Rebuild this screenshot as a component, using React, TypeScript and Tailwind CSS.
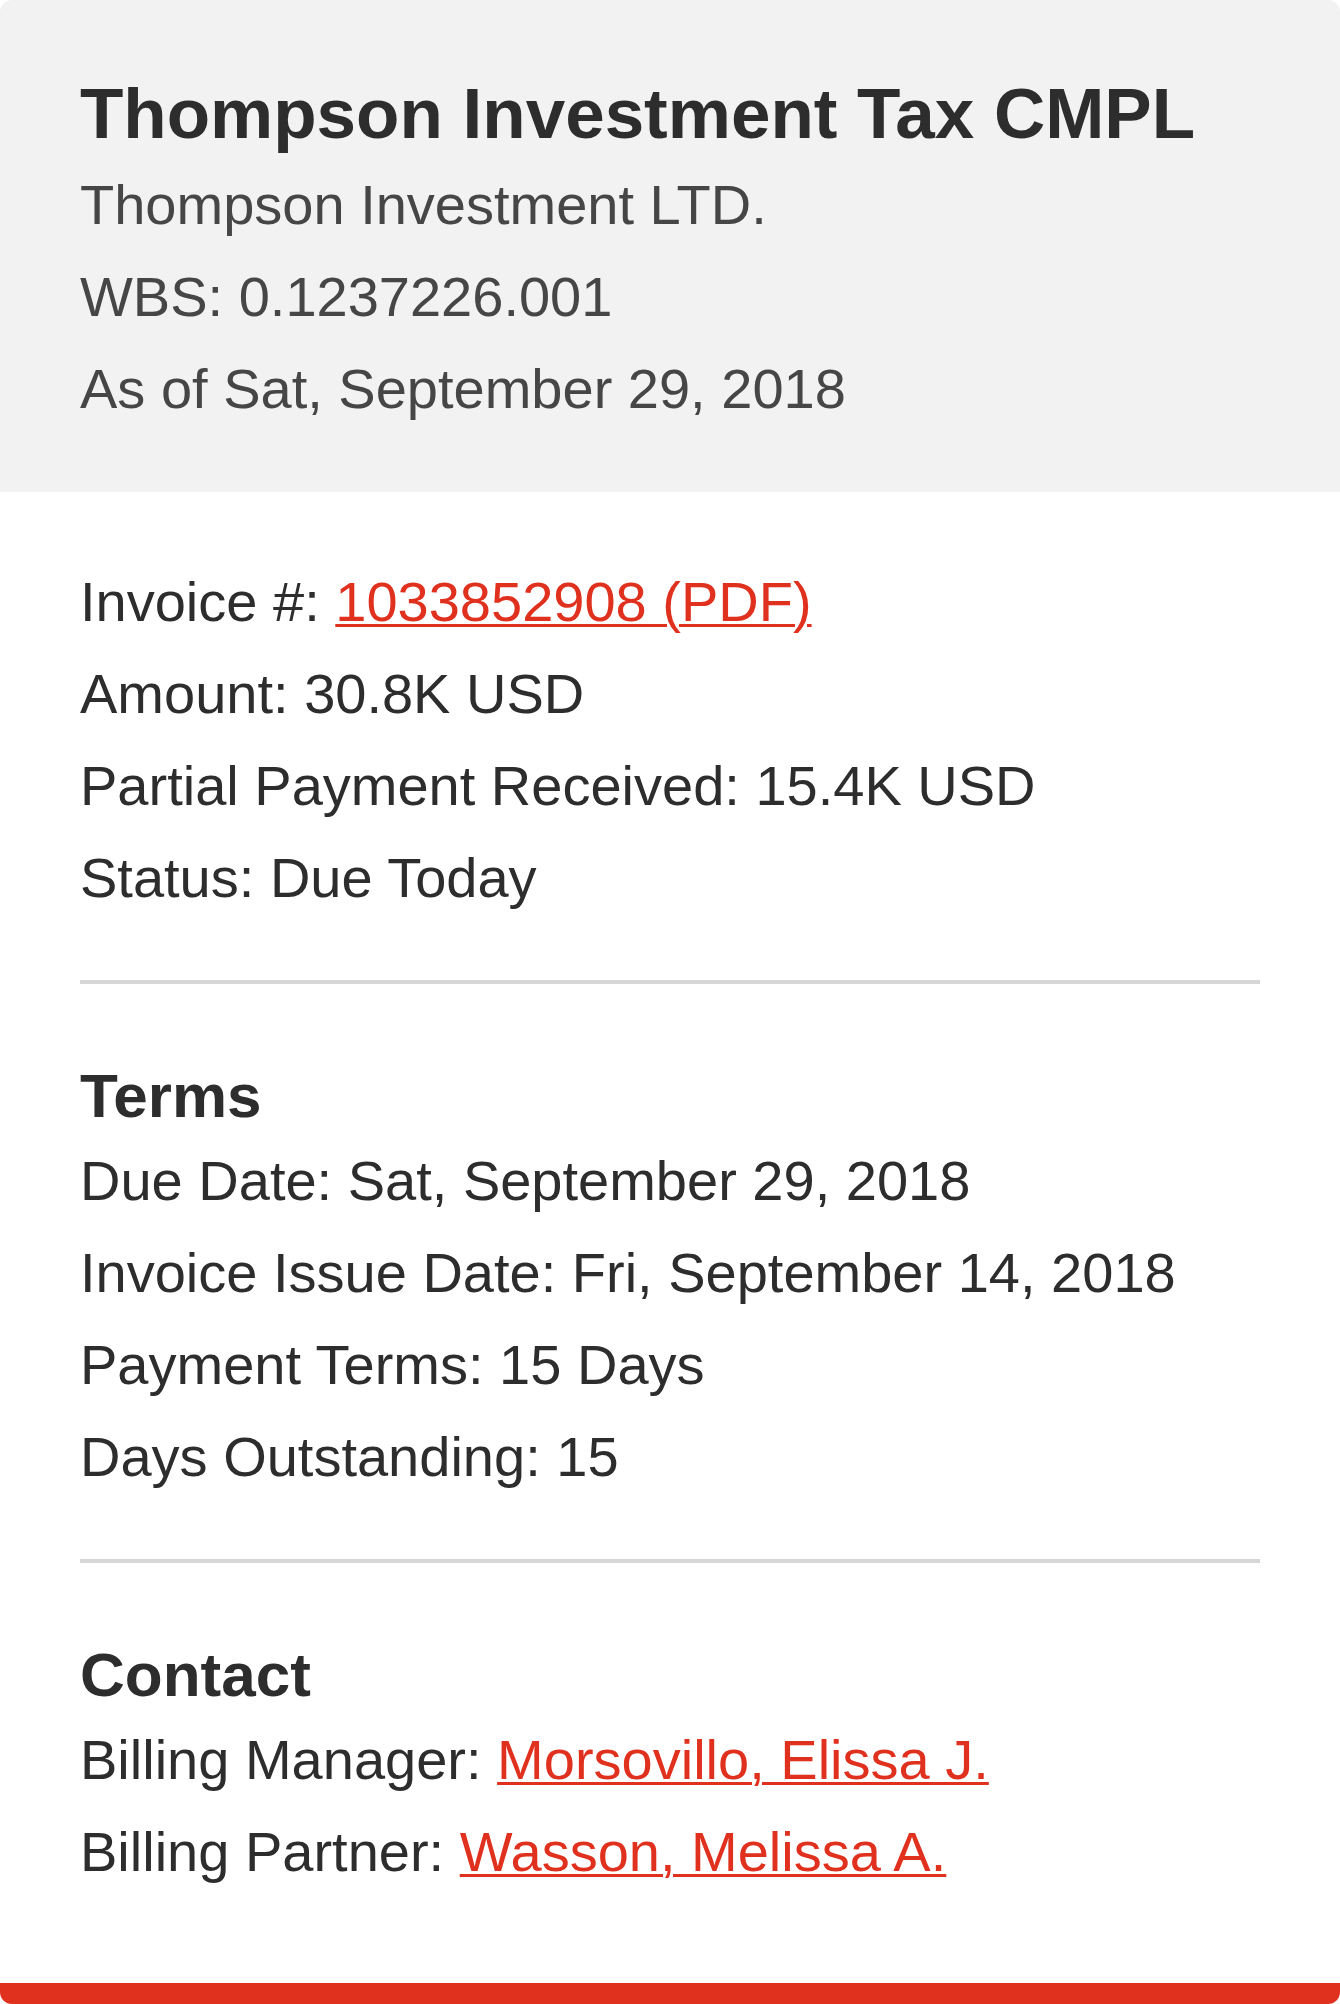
import React from "react";

interface Line {
   label: string;
   value: string;
   link?: boolean;
}

const invoiceLines: Line[] = [
   { label: "Invoice #:", value: "1033852908 (PDF)", link: true },
   { label: "Amount:", value: "30.8K USD" },
   { label: "Partial Payment Received:", value: "15.4K USD" },
   { label: "Status:", value: "Due Today" },
];

const termsLines: Line[] = [
   { label: "Due Date:", value: "Sat, September 29, 2018" },
   { label: "Invoice Issue Date:", value: "Fri, September 14, 2018" },
   { label: "Payment Terms:", value: "15 Days" },
   { label: "Days Outstanding:", value: "15" },
];

const contactLines: Line[] = [
   { label: "Billing Manager:", value: "Morsovillo, Elissa J.", link: true },
   { label: "Billing Partner:", value: "Wasson, Melissa A.", link: true },
];

const Row = ({ line }: { line: Line }) => (
   <p className="text-[56px] leading-[92px] text-[#2d2d2d] whitespace-nowrap">
      {line.label}{" "}
      {line.link ? (
         <a
            href="#"
            className="text-[#e0301e] underline decoration-[3px] underline-offset-[3px]"
         >
            {line.value}
         </a>
      ) : (
         line.value
      )}
   </p>
);

const Divider = () => <div className="h-[4px] bg-[#d6d6d6] mt-[56px]" />;

const App = () => {
   return (
      <div
         className="w-[1340px] h-[2004px] bg-white"
         style={{ fontFamily: '"Liberation Sans", Arial, sans-serif' }}
      >
         <div className="h-full rounded-[12px] overflow-hidden flex flex-col bg-white">
            <header className="bg-[#f2f2f2] px-[80px] pt-[69px] pb-[57px]">
               <h1 className="text-[71px] leading-[90px] font-bold text-[#2d2d2d] whitespace-nowrap">
                  Thompson Investment Tax CMPL
               </h1>
               <p className="text-[56px] leading-[92px] text-[#464646]">Thompson Investment LTD.</p>
               <p className="text-[56px] leading-[92px] text-[#464646]">WBS: 0.1237226.001</p>
               <p className="text-[56px] leading-[92px] text-[#464646]">As of Sat, September 29, 2018</p>
            </header>

            <main className="flex-1 px-[80px] pt-[64px]">
               <section>
                  {invoiceLines.map((line, i) => (
                     <Row key={i} line={line} />
                  ))}
               </section>

               <Divider />

               <section className="pt-[73px]">
                  <h2 className="text-[62px] leading-[78px] font-bold text-[#2d2d2d]">Terms</h2>
                  {termsLines.map((line, i) => (
                     <Row key={i} line={line} />
                  ))}
               </section>

               <Divider />

               <section className="pt-[73px]">
                  <h2 className="text-[62px] leading-[78px] font-bold text-[#2d2d2d]">Contact</h2>
                  {contactLines.map((line, i) => (
                     <Row key={i} line={line} />
                  ))}
               </section>
            </main>

            <div className="h-[21px] bg-[#e0301e]" />
         </div>
      </div>
   );
};

export default App;
